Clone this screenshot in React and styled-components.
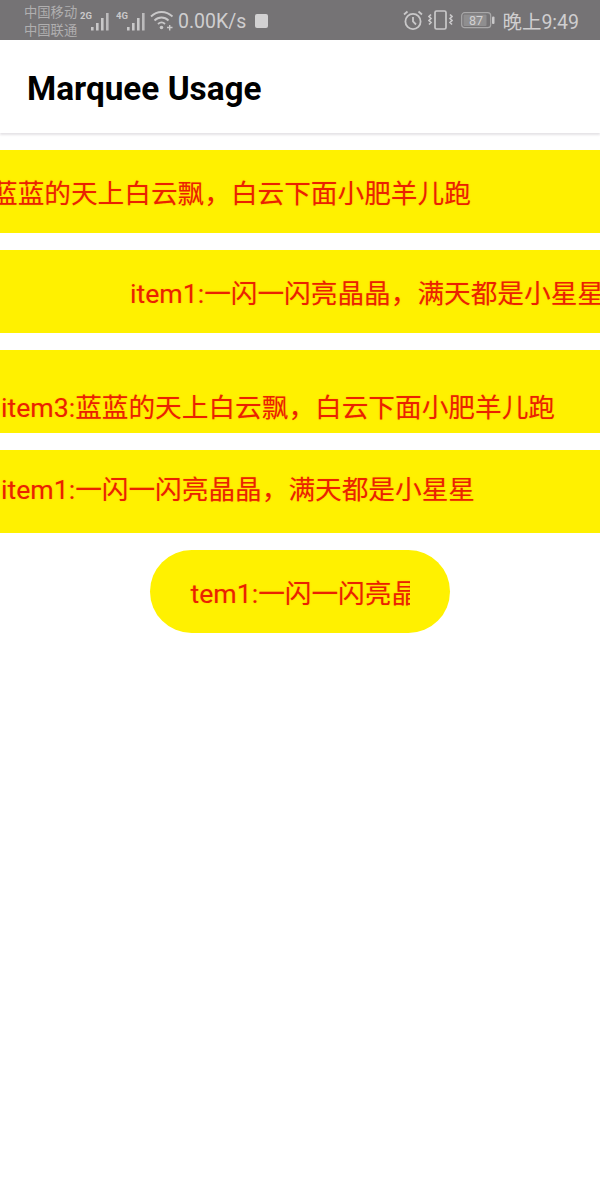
import React from 'react';
import styled, { createGlobalStyle } from 'styled-components';

const Global = createGlobalStyle`
  html, body { margin: 0; padding: 0; background: #fff; }
  body { font-family: Roboto, "Noto Sans CJK SC", sans-serif; }
`;
const Page = styled.div`
  width: 600px; height: 1200px; overflow: hidden; background: #fff;
  display: flex; flex-direction: column;
`;
const StatusBar = styled.div`
  height: 40px; flex: none; background: #757375; color: #c9c8c9;
  display: flex; align-items: center; justify-content: space-between;
  padding: 0 21px 0 24px; box-sizing: border-box;
`;
const StatusGroup = styled.div`display: flex; align-items: center;`;
const Carriers = styled.div`
  font: 13.3px/18px "Noto Sans CJK SC", sans-serif; color: #b0afb0; width: 56px; white-space: nowrap; margin-top: 1px;
`;
const Speed = styled.span`font-size: 19.500px; margin: 2px 9px 0 4px; color: #cfcecf; white-space: nowrap;`;
const Stop = styled.span`width: 13px; height: 14px; margin-top: 2px; border-radius: 2px; background: #d2d1d2;`;
const Clock = styled.span`font-size: 19.500px; margin: 1px 0 0 7px; color: #cfcecf; white-space: nowrap;`;
const Header = styled.header`
  height: 93px; flex: none; display: flex; align-items: center; padding: 5px 0 0 27px; background: #fff;
  box-shadow: 0 2px 2px rgba(70,60,80,.14); box-sizing: border-box;
`;
const Title = styled.h1`margin: 0; font: 700 33.350px/1 Roboto, sans-serif; color: #000;`;
const List = styled.main`
  display: flex; flex-direction: column; align-items: center; gap: 17px; padding-top: 17px;
`;
const Bar = styled.div`
  width: ${p => p.$pill ? '220px' : '600px'};
  padding: 0 ${p => p.$pill ? '40px' : '0'};
  height: 83px; flex: none; background: #fff100; overflow: hidden;
  border-radius: ${p => p.$pill ? '42px' : '0'};
  display: flex; align-items: center;
`;
const Clip = styled.div`width: 100%; overflow: hidden; margin-top: ${p => p.$drop}px;`;
const Text = styled.div`
  margin-left: ${p => p.$offset}px; white-space: nowrap; color: #ea2200;
  font: 26.67px/40px Roboto, "Noto Sans CJK SC", sans-serif;
  text-shadow: 0 0 1.500px rgba(255,140,0,.55);
`;

const Mobile = ({ label, gap }) => (
  <svg width="29" height="24" viewBox="0 0 29 24" fill="#c9c8c9" style={{ marginRight: gap }}>
    <text x="0" y="11" fontSize="9.500" fontWeight="700" fontFamily="Roboto" fill="#c9c8c9">{label}</text>
    <rect x="11" y="19" width="2.600" height="3.500" /><rect x="16" y="15" width="2.600" height="7.500" />
    <rect x="21" y="10" width="2.600" height="12.500" /><rect x="26" y="5" width="2.600" height="17.500" opacity=".85" />
  </svg>
);
const Wifi = () => (
  <svg width="24" height="22" viewBox="0 0 24 22" fill="none" stroke="#c9c8c9" strokeWidth="1.800">
    <path d="M1 7.500C7 1.500 16 1.500 22.500 7.500" /><path d="M4.500 11.500C8.500 7.500 14.500 7.500 18.500 11.500" /><path d="M8 15c2.200-2 5-2 7 0" />
    <circle cx="11.500" cy="18.500" r="1.800" fill="#c9c8c9" stroke="none" /><path d="M17 18.500h5.500M19.700 16v5.500" strokeWidth="1.400" />
  </svg>
);
const Alarm = () => (
  <svg width="20" height="22" viewBox="0 0 20 22" fill="none" stroke="#c9c8c9" strokeWidth="1.800">
    <circle cx="10" cy="12.500" r="7.600" /><path d="M10 8v4.500l3 3" /><path d="M1 5.500L4.500 2.500M19 5.500L15.500 2.500" />
  </svg>
);
const Vibrate = () => (
  <svg width="25" height="20" viewBox="0 0 25 20" fill="none" stroke="#c9c8c9" strokeWidth="1.700" style={{ margin: '0 8px 0 5px' }}>
    <rect x="7" y="1" width="11" height="18" rx="1.500" />
    <path d="M3 4.500l-2 2 2 2-2 2 2 2-2 2M22 4.500l2 2-2 2 2 2-2 2 2 2" />
  </svg>
);
const Battery = () => (
  <svg width="34" height="18" viewBox="0 0 34 18">
    <rect x=".7" y="1.700" width="29" height="15" rx="3" fill="none" stroke="#a9a8a9" strokeWidth="1.200" />
    <rect x="2.500" y="3.500" width="23" height="11.500" rx="1" fill="#8f8e8f" />
    <rect x="31" y="5.500" width="2.500" height="7.500" rx="1" fill="#c9c8c9" />
    <text x="8" y="14" fontSize="12.500" fontFamily="Roboto" fill="#d2d1d2">87</text>
  </svg>
);

const rows = [
  { offset: -9, drop: 4, text: '蓝蓝的天上白云飘，白云下面小肥羊儿跑' },
  { offset: 130, drop: 4, text: 'item1:一闪一闪亮晶晶，满天都是小星星' },
  { offset: 1, drop: 32, text: 'item3:蓝蓝的天上白云飘，白云下面小肥羊儿跑' },
  { offset: 1, drop: -4, text: 'item1:一闪一闪亮晶晶，满天都是小星星' },
];

export default function App() {
  return (
    <Page>
      <Global />
      <StatusBar>
        <StatusGroup>
          <Carriers>中国移动<br />中国联通</Carriers>
          <Mobile label="2G" gap={7} />
          <Mobile label="4G" gap={5} />
          <Wifi />
          <Speed>0.00K/s</Speed>
          <Stop />
        </StatusGroup>
        <StatusGroup>
          <Alarm />
          <Vibrate />
          <Battery />
          <Clock>晚上9:49</Clock>
        </StatusGroup>
      </StatusBar>
      <Header><Title>Marquee Usage</Title></Header>
      <List>
        {rows.map((r, i) => (
          <Bar key={i}><Clip $drop={r.drop}><Text $offset={r.offset}>{r.text}</Text></Clip></Bar>
        ))}
        <Bar $pill><Clip $drop={4}><Text $offset={-6}>item1:一闪一闪亮晶晶，满天都是小星星</Text></Clip></Bar>
      </List>
    </Page>
  );
}
